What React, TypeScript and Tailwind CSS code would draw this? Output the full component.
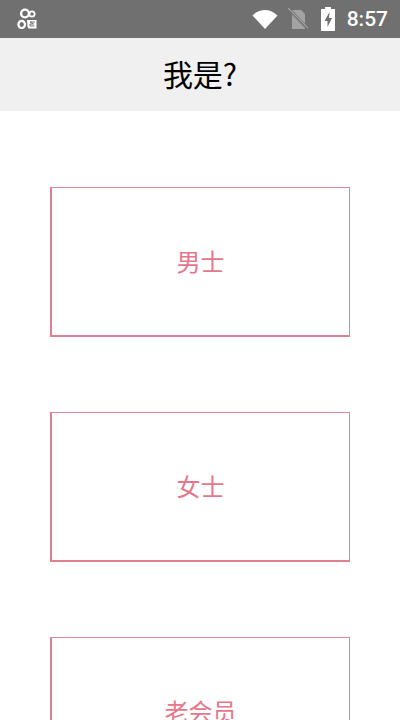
const cjk = { fontFamily: '"Noto Sans CJK SC", "Liberation Sans", sans-serif' }

function CameraIcon() {
  return (
    <svg width="20" height="21" viewBox="0 0 20 21" fill="none" stroke="#fff" className="-translate-y-px">
      <circle cx="8" cy="5.500" r="3.900" strokeWidth="2.400" />
      <circle cx="15" cy="6" r="2.600" strokeWidth="1.800" />
      <ellipse cx="4.700" cy="16.500" rx="3.300" ry="3.600" strokeWidth="2.200" />
      <path d="M10 12h9.500v8.500h-8l-1-2z" fill="#fff" stroke="none" />
      <path d="M18 14h-5l3.500 2h-3.500v2h4.500" stroke="#707070" strokeWidth="1" />
    </svg>
  )
}

function StatusIcons() {
  return (
    <div className="flex items-center">
      {/* wifi */}
      <svg width="26" height="20" viewBox="0 0 26 20" className="mr-[10px]">
        <path d="M0.500 6.500C4 3 8.500 1 13 1s9 2 12.500 5.500L13 20z" fill="#fff" />
      </svg>
      {/* no sim */}
      <svg width="20" height="22" viewBox="0 0 20 22" className="mr-[14px]">
        <path d="M4 2h9l4 4v15H4z" fill="#a3a3a3" />
        <path d="M1 1l18 19" stroke="#707070" strokeWidth="3" />
        <path d="M0 0l20 20" stroke="#a3a3a3" strokeWidth="1.200" />
      </svg>
      {/* battery charging */}
      <svg width="14" height="24" viewBox="0 0 14 24" className="mr-[11px] -translate-x-px">
        <path d="M4 0h6v2h4v22H0V2h4z" fill="#fff" />
        <path d="M8.500 5L3.500 14h3v6l4.500-9H8z" fill="#707070" />
      </svg>
      <span className="text-[21px] font-medium leading-none text-white" style={{ fontFamily: 'Roboto, sans-serif' }}>8:57</span>
    </div>
  )
}

function Choice({ label }: { label: string }) {
  return (
    <div className="shrink-0 flex h-[150px] w-[300px] items-center justify-center border-t border-r border-b-2 border-l-2 border-t-[#e08a98] border-r-[#e08a98] border-b-[#de8090] border-l-[#e0808f] pb-[2px] text-[24px] text-[#e5778c]">
      {label}
    </div>
  )
}

export default function App() {
  return (
    <div className="flex h-[720px] w-[400px] flex-col overflow-hidden bg-white" style={cjk}>
      <div className="flex h-[38px] shrink-0 items-center justify-between bg-[#707070] pl-[17px] pr-[12px]">
        <CameraIcon />
        <StatusIcons />
      </div>
      <div className="flex h-[73px] shrink-0 items-center justify-center bg-[#f0f0f0] pb-[2px] text-[30px] text-black">
        我是?
      </div>
      <div className="flex flex-col items-center gap-[75px] pt-[76px]">
        <Choice label="男士" />
        <Choice label="女士" />
        <Choice label="老会员" />
      </div>
    </div>
  )
}
